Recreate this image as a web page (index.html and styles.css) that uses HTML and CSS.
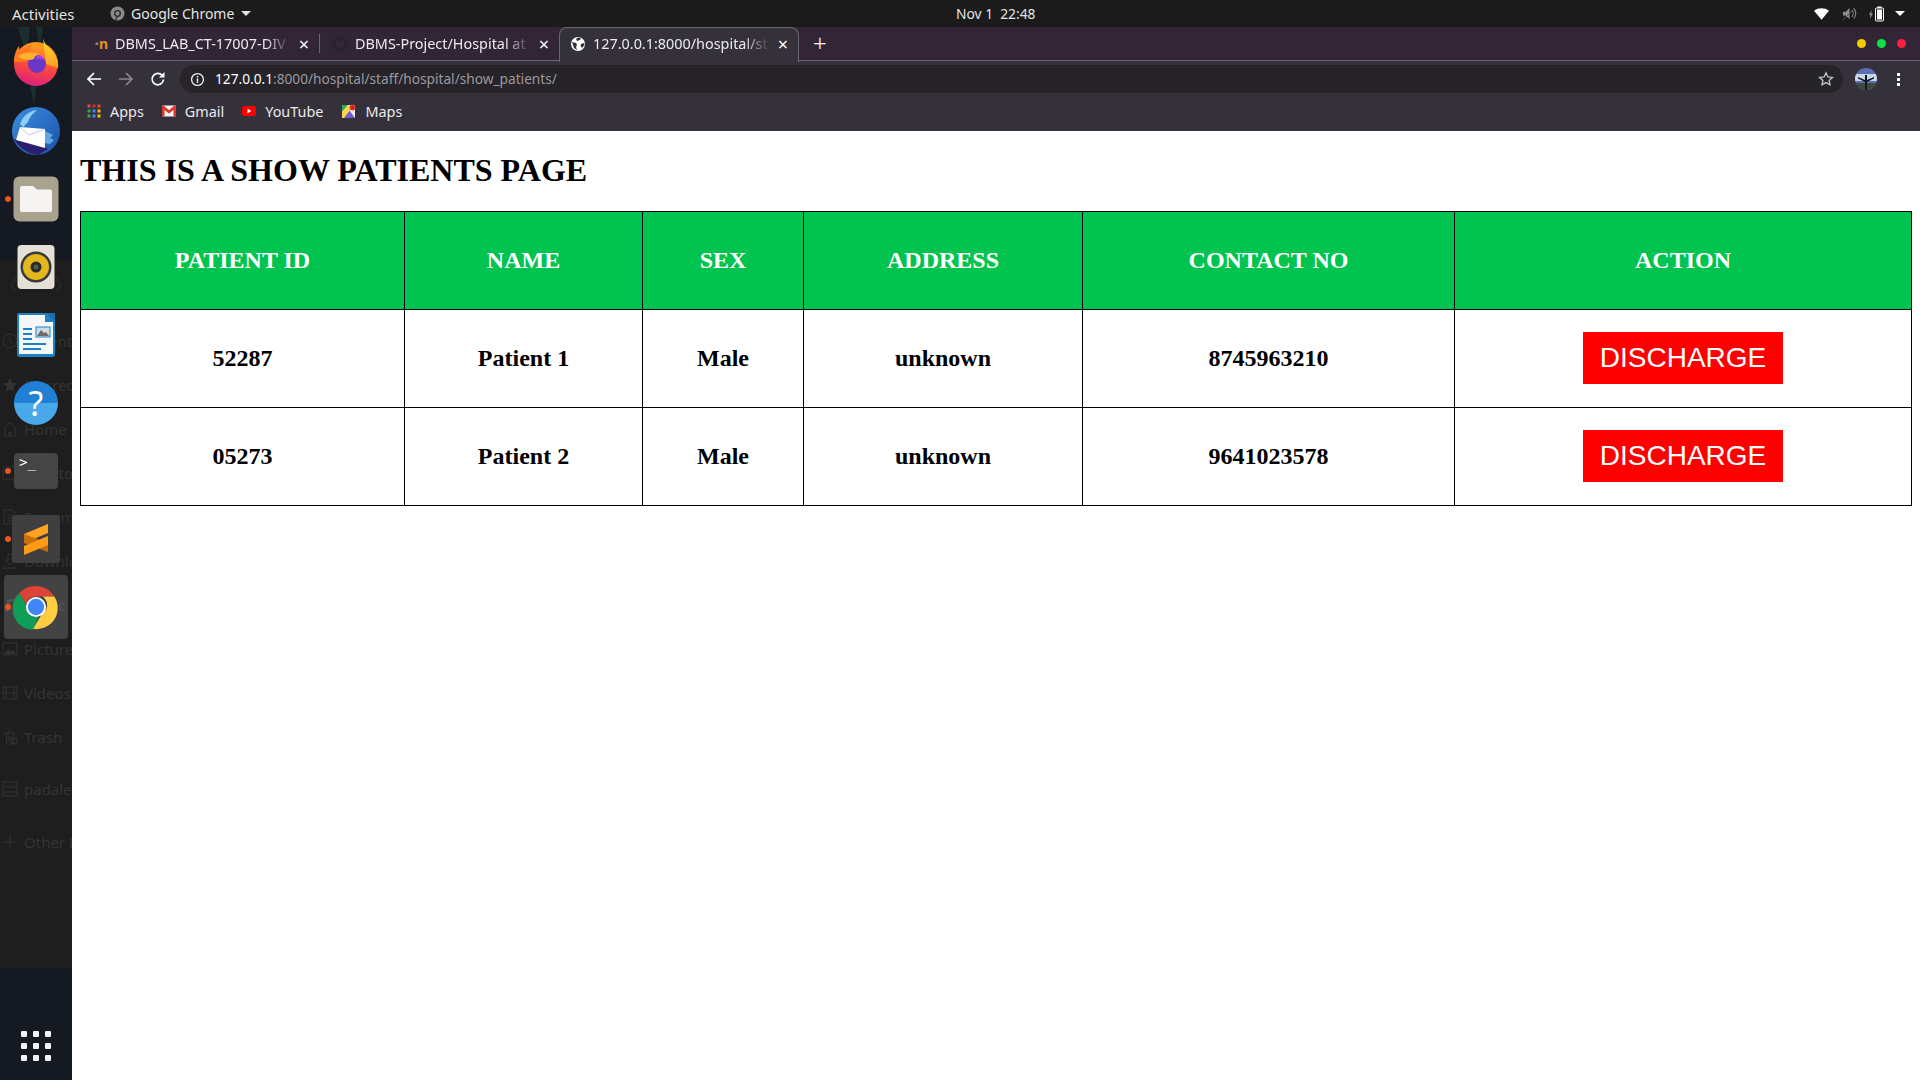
FILE: index.html
```html
<!DOCTYPE html>
<html lang="en">
<head>
<meta charset="utf-8">
<title>Show patients</title>
<link rel="stylesheet" href="styles.css">
</head>
<body>
<div class="screen">
  <header class="topbar">
    <span class="activities">Activities</span>
    <div class="appmenu">
      <svg class="appicon" viewBox="0 0 16 16"><circle cx="8" cy="8" r="7.5" fill="#8a8a8a"/><circle cx="8" cy="8" r="3" fill="none" stroke="#2a2a2a" stroke-width="1.4"/><path d="M8 11l-2 4" stroke="#2a2a2a" stroke-width="1.2"/></svg>
      <span>Google Chrome</span>
      <i class="caret"></i>
    </div>
    <div class="clock">Nov 1&nbsp;&nbsp;22:48</div>
    <div class="tray">
      <svg class="wifi" viewBox="0 0 16 12"><path d="M0 2.500C4.500-1 11.500-1 16 2.500L8 12z" fill="#fff"/></svg>
      <svg class="vol" viewBox="0 0 16 16"><path d="M1 6h3l4-4v12l-4-4H1z" fill="#8d8d8d"/><path d="M10.500 4.500a5 5 0 0 1 0 7M12.500 2.500a8 8 0 0 1 0 11" fill="none" stroke="#8d8d8d" stroke-width="1.100"/><path d="M1 15L14 2" stroke="#5a5a5a" stroke-width="1"/></svg>
      <svg class="batt" viewBox="0 0 16 16"><path d="M2.500 4L0 9h1.600L1 13l3-5.500H2.400z" fill="#8d8d8d"/><rect x="6.500" y="2" width="8" height="13" rx="1" fill="none" stroke="#fff" stroke-width="1"/><rect x="8.500" y="0.500" width="4" height="1.500" fill="#fff"/><rect x="8" y="3.500" width="5" height="10" fill="#fff"/></svg>
      <i class="caret wide"></i>
    </div>
  </header>

  <div class="desktop">
    <aside class="sidebar">
      <svg class="streaks" viewBox="0 0 72 80"><path d="M18 0l9 30 3-30zM27 44l7 34 4-32zM36 0l4 22 3-22z" fill="#1b2f30"/></svg>
      <div class="ghost">
        <svg class="chevrons" viewBox="0 0 50 16"><path d="M5 1L0 8l5 7M45 1l5 7-5 7" fill="none" stroke="#333" stroke-width="1"/></svg>
        <div class="ghost-row"><svg class="g-ic" viewBox="0 0 16 16"><circle cx="8" cy="8" r="7"/><path d="M8 4v4l3 2"/></svg>Recent</div>
        <div class="ghost-row"><svg class="g-ic" viewBox="0 0 16 16"><path class="solid" d="M8 1l2 5 5 .5-4 3.500 1.200 5L8 12.500 3.800 15 5 10 1 6.500 6 6z"/></svg>Starred</div>
        <div class="ghost-row"><svg class="g-ic" viewBox="0 0 16 16"><path d="M1 8l7-6 7 6M3 7v8h10V7M7 15v-4h2v4"/></svg>Home</div>
        <div class="ghost-row"><svg class="g-ic" viewBox="0 0 16 16"><rect x="1" y="2" width="14" height="12"/></svg>Desktop</div>
        <div class="ghost-row"><svg class="g-ic" viewBox="0 0 16 16"><path d="M2 1h8l4 4v10H2zM5 6h6M5 9h6M5 12h6"/></svg>Documents</div>
        <div class="ghost-row"><svg class="g-ic" viewBox="0 0 16 16"><path d="M6 1h4v6h3l-5 5-5-5h3zM1 15h14"/></svg>Downloads</div>
        <div class="ghost-row"><svg class="g-ic" viewBox="0 0 16 16"><path class="solid" d="M5 3l9-2v10a2 2 0 1 1-2-2V4L7 5v8a2 2 0 1 1-2-2z"/></svg>Music</div>
        <div class="ghost-row"><svg class="g-ic" viewBox="0 0 16 16"><rect x="1" y="2" width="14" height="12"/><path class="solid" d="M2 13l4-5 3 3 2-2 3 4z"/></svg>Pictures</div>
        <div class="ghost-row"><svg class="g-ic" viewBox="0 0 16 16"><rect x="1" y="2" width="14" height="12"/><path d="M4 2v12M12 2v12M1 8h14"/></svg>Videos</div>
        <div class="ghost-row"><svg class="g-ic" viewBox="0 0 16 16"><path d="M2 4h10M4 4l1 11h6l1-11M6 2h3M7 7v5M9 7v5"/><circle cx="12" cy="12" r="3"/></svg>Trash</div>
        <div class="ghost-row drive"><svg class="g-ic" viewBox="0 0 16 16"><rect x="1" y="1" width="14" height="14"/><path d="M1 6h14M1 11h14"/></svg>padaleX</div>
        <div class="ghost-row other"><svg class="g-ic" viewBox="0 0 16 16"><path d="M8 1v14M1 8h14"/></svg>Other Locations</div>
      </div>
      <nav class="dock">
        <div class="dock-item">
          <svg class="ic48 up2" viewBox="0 0 48 48">
            <defs>
              <linearGradient id="ff" x1="0.6" y1="0.100" x2="0.400" y2="1"><stop offset="0" stop-color="#ff9a1f"/><stop offset="0.550" stop-color="#f8453f"/><stop offset="1" stop-color="#dc1f82"/></linearGradient>
              <linearGradient id="fy" x1="0.500" y1="0" x2="0.500" y2="1"><stop offset="0" stop-color="#ffe22e"/><stop offset="1" stop-color="#ff9a1f"/></linearGradient>
            </defs>
            <circle cx="24" cy="26" r="22" fill="url(#ff)"/>
            <path d="M31 0c1 6 5 8 9 13s7 10 6 17l-12-4z" fill="url(#fy)"/>
            <path d="M2 24c0-7 2-12 5-16 0 3 1 5 3 6 2-3 5-6 9-7-1 2-1 4 0 5l-6 12z" fill="#ff7a1f"/>
            <circle cx="25" cy="26" r="9" fill="#6a38c9"/>
            <path d="M25 17a9 9 0 0 1 8 5c-4-2-7-2-9 0z" fill="#a04be0"/>
            <path d="M6 18c5-3 13-5 21-2-3 1-5 3-5 5-6 2-12 1-16-3z" fill="#ffb22e"/>
          </svg>
        </div>
        <div class="dock-item">
          <svg class="ic48" viewBox="0 0 48 48">
            <defs><linearGradient id="tb" x1="0" y1="0" x2="1" y2="1"><stop offset="0" stop-color="#3b8fe0"/><stop offset="1" stop-color="#1c4fa8"/></linearGradient></defs>
            <circle cx="24" cy="24" r="24" fill="url(#tb)"/>
            <path d="M2 32c4 8 13 15 24 16l10-6-8-6z" fill="#2a1f6e"/>
            <path d="M8 20L33 22V41L4 33z" fill="#fff"/>
            <path d="M8 20l9 8 16-6" fill="none" stroke="#b6c1cf" stroke-width="0.800"/>
            <path d="M8 17c3-8 9-13 17-14-5 4-8 8-9 12l-5 5z" fill="#8fd0f5"/>
            <path d="M33 24l8 4-3 3 4 2-4 4-5-1z" fill="#5fa8e6"/>
          </svg>
        </div>
        <div class="dock-item running">
          <svg class="ic46" viewBox="0 0 46 46">
            <rect x="0.500" y="0.500" width="45" height="45" rx="6" fill="#a9a28f"/>
            <path d="M7 12a2 2 0 0 1 2-2h11l4 3.500h13a2 2 0 0 1 2 2V34a2 2 0 0 1-2 2H9a2 2 0 0 1-2-2z" fill="#f6f5f4"/>
          </svg>
        </div>
        <div class="dock-item">
          <svg class="ic46" viewBox="0 0 46 46">
            <rect x="4.500" y="1" width="37" height="44" rx="4" fill="#e4e0d5"/>
            <circle cx="23" cy="23" r="15.500" fill="#3a3a3a"/>
            <circle cx="23" cy="23" r="13" fill="#e3b81c"/>
            <circle cx="23" cy="23" r="5.500" fill="#2a2a2a"/>
            <circle cx="23" cy="23" r="2.500" fill="#555"/>
          </svg>
        </div>
        <div class="dock-item">
          <svg class="ic46 shift-l" viewBox="0 0 46 46">
            <path d="M6 3a2 2 0 0 1 2-2h28l8 8v33a3 3 0 0 1-3 3H9a3 3 0 0 1-3-3z" fill="#1b83c4"/>
            <path d="M8 3h26v7h8v32H8z" fill="#f5f7f9"/>
            <path d="M35 1l9 9V1z" fill="#1b6fa8"/>
            <rect x="25" y="15" width="14" height="10" fill="#cfdbe6" stroke="#1b83c4"/>
            <path d="M26 24l4-6 3 3 2-1 3 4z" fill="#6b6b6b"/>
            <path d="M12 17h9M12 22h9M12 27h9M12 32h23M12 37h18" stroke="#1b83c4" stroke-width="2.200"/>
          </svg>
        </div>
        <div class="dock-item">
          <div class="help">?</div>
        </div>
        <div class="dock-item running">
          <div class="term"><span>&gt;_</span></div>
        </div>
        <div class="dock-item running">
          <div class="sublime-bg">
            <svg class="ic-sub" viewBox="0 0 24 31">
              <path d="M0 10L24 0V9L0 19z" fill="#ffa21f"/>
              <path d="M0 10V19L24 28V19z" fill="#c96e0c"/>
              <path d="M0 22L24 12V21L0 31z" fill="#ff9b14"/>
            </svg>
          </div>
        </div>
        <div class="dock-item running active">
          <svg class="ic44" viewBox="0 0 48 48">
            <path d="M24 2a22 22 0 0 1 19.050 11H24a11 11 0 0 0-10.400 7.500L6.600 9.600A22 22 0 0 1 24 2z" fill="#db4437"/>
            <path d="M6.600 9.600l9.500 16.500a9 9 0 0 0 10.900 7.400l-5.900 14.300A22 22 0 0 1 6.600 9.600z" fill="#0f9d58"/>
            <path d="M43.050 13a22 22 0 0 1-22 33.800L30 31.500A11 11 0 0 0 31 13z" fill="#ffcd40"/>
            <circle cx="24" cy="24" r="10.500" fill="#fff"/>
            <circle cx="24" cy="24" r="8.500" fill="#4285f4"/>
          </svg>
        </div>
      </nav>
      <div class="grid-btn">
        <i></i><i></i><i></i><i></i><i></i><i></i><i></i><i></i><i></i>
      </div>
    </aside>

    <main class="browser">
      <div class="tabstrip">
        <div class="tab">
          <span class="fav fav-m"><b class="m-dot">&#183;</b>n</span>
          <span class="tab-title">DBMS_LAB_CT-17007-DIV</span>
          <span class="tab-x">&#215;</span>
        </div>
        <div class="tab sep">
          <svg class="fav" viewBox="0 0 16 16"><circle cx="8" cy="8" r="8" fill="#2b2231"/><path d="M4 4l2 1.500h4L12 4v4a4 4 0 0 1-8 0z" fill="#33293a"/></svg>
          <span class="tab-title">DBMS-Project/Hospital at</span>
          <span class="tab-x">&#215;</span>
        </div>
        <div class="tab current">
          <svg class="fav" viewBox="0 0 16 16"><circle cx="8" cy="8" r="7" fill="#fff"/><path d="M2 6l4 1 1 2-1 2 1 3-3-2zM8 1.500l3 .500-1 2-3 1-1-2zM11 8l3-1 .5 2-2.500 3-1.500-2z" fill="#35313a"/></svg>
          <span class="tab-title">127.0.0.1:8000/hospital/st</span>
          <span class="tab-x">&#215;</span>
        </div>
        <span class="newtab">+</span>
        <div class="winbtns"><i class="w-y"></i><i class="w-g"></i><i class="w-r"></i></div>
      </div>

      <div class="toolbar">
        <svg class="nav-ic" viewBox="0 0 16 16"><path d="M15 8H2M8 2L2 8l6 6" fill="none" stroke="#fff" stroke-width="1.700"/></svg>
        <svg class="nav-ic dim" viewBox="0 0 16 16"><path d="M1 8h13M8 2l6 6-6 6" fill="none" stroke="#88868b" stroke-width="1.700"/></svg>
        <svg class="nav-ic" viewBox="0 0 16 16"><path d="M13.500 8.500A5.700 5.700 0 1 1 12 4.200" fill="none" stroke="#fff" stroke-width="1.700"/><path d="M14.500 1v5.500H9z" fill="#fff"/></svg>
        <div class="omnibox">
          <svg class="info" viewBox="0 0 16 16"><circle cx="8" cy="8" r="6.300" fill="none" stroke="#f0f0f0" stroke-width="1.400"/><rect x="7.200" y="7" width="1.600" height="4.500" fill="#f0f0f0"/><rect x="7.200" y="4.300" width="1.600" height="1.600" fill="#f0f0f0"/></svg>
          <span class="url"><b>127.0.0.1</b>:8000/hospital/staff/hospital/show_patients/</span>
          <svg class="star" viewBox="0 0 16 16"><path d="M8 1.800l1.900 4.100 4.500.5-3.300 3 .9 4.400L8 11.600l-4 2.200.9-4.400-3.300-3 4.500-.5z" fill="none" stroke="#c8c7ca" stroke-width="1.300"/></svg>
        </div>
        <svg class="avatar" viewBox="0 0 22 22">
          <defs><clipPath id="av"><circle cx="11" cy="11" r="11"/></clipPath></defs>
          <g clip-path="url(#av)">
            <rect width="22" height="22" fill="#5c6fb4"/>
            <rect y="6" width="22" height="7" fill="#c9d4ea"/>
            <rect y="15" width="22" height="7" fill="#3f4a3f"/>
            <path d="M3 9l7 3V7h2v5l7-3v1.500l-7 3.500v9h-2v-9l-7-3.500z" fill="#15171c"/>
          </g>
        </svg>
        <div class="kebab"><i></i><i></i><i></i></div>
      </div>

      <div class="bookmarks">
        <div class="bm">
          <svg class="bm-ic" viewBox="0 0 14 14">
            <rect x="0.500" y="0.500" width="3" height="3" fill="#e8453c"/><rect x="5.500" y="0.500" width="3" height="3" fill="#c0392b"/><rect x="10.500" y="0.500" width="3" height="3" fill="#e8453c"/>
            <rect x="0.500" y="5.500" width="3" height="3" fill="#34a853"/><rect x="5.500" y="5.500" width="3" height="3" fill="#4285f4"/><rect x="10.500" y="5.500" width="3" height="3" fill="#fbbc05"/>
            <rect x="0.500" y="10.500" width="3" height="3" fill="#34a853"/><rect x="5.500" y="10.500" width="3" height="3" fill="#4285f4"/><rect x="10.500" y="10.500" width="3" height="3" fill="#fbbc05"/>
          </svg>Apps</div>
        <div class="bm">
          <svg class="bm-ic" viewBox="0 0 14 14"><rect x="0" y="1.500" width="14" height="11" rx="1" fill="#f2f2f2"/><path d="M0 2.500v9.500a.5.5 0 0 0 .5.5H2.500V6l4.500 3.500L11.500 6v6.500h2a.5.5 0 0 0 .5-.5V2.500L12.500 1.500 7 6 1.500 1.500z" fill="#d93a2e"/></svg>Gmail</div>
        <div class="bm">
          <svg class="bm-ic" viewBox="0 0 14 14"><rect x="0" y="2" width="14" height="10" rx="2.500" fill="#f00"/><path d="M5.500 4.800L9.500 7l-4 2.200z" fill="#fff"/></svg>YouTube</div>
        <div class="bm">
          <svg class="bm-ic" viewBox="0 0 14 14"><rect x="0" y="1" width="13" height="13" fill="#e8eaed"/><path d="M0 14L7 6l6 8z" fill="#6f5bd1"/><path d="M0 1h6L0 8z" fill="#34a853"/><path d="M0 8l6-7 3 4-7 9H0z" fill="#fbd54a"/><circle cx="10.500" cy="3.500" r="3" fill="#e0382c"/><circle cx="10.500" cy="3.500" r="1" fill="#8a1d15"/></svg>Maps</div>
      </div>

      <section class="page">
        <h1 class="page-title">THIS IS A SHOW PATIENTS PAGE</h1>
        <table class="patients">
          <colgroup>
            <col class="c1"><col class="c2"><col class="c3"><col class="c4"><col class="c5"><col class="c6">
          </colgroup>
          <thead>
            <tr>
              <th>PATIENT ID</th><th>NAME</th><th>SEX</th><th>ADDRESS</th><th>CONTACT NO</th><th>ACTION</th>
            </tr>
          </thead>
          <tbody>
            <tr>
              <td>52287</td><td>Patient 1</td><td>Male</td><td>unknown</td><td>8745963210</td>
              <td><a class="discharge">DISCHARGE</a></td>
            </tr>
            <tr>
              <td>05273</td><td>Patient 2</td><td>Male</td><td>unknown</td><td>9641023578</td>
              <td><a class="discharge">DISCHARGE</a></td>
            </tr>
          </tbody>
        </table>
      </section>
    </main>
  </div>
</div>
</body>
</html>
```
FILE: styles.css
```css
* { box-sizing: border-box; }
html, body { margin: 0; height: 100%; overflow: hidden; background: #fff; }
.screen { width: 1920px; height: 1080px; display: flex; flex-direction: column; font-family: "Noto Sans", sans-serif; }

/* top bar */
.topbar { height: 27px; flex: none; background: #1b1b1b; color: #e4e4e4; font-size: 14px; display: flex; align-items: center; position: relative; }
.activities { margin-left: 12px; width: 98px; font-size: 15px; }
.appmenu { display: flex; align-items: center; gap: 6px; }
.appicon { width: 15px; height: 15px; }
.caret { width: 0; height: 0; border-left: 5px solid transparent; border-right: 5px solid transparent; border-top: 5px solid #e4e4e4; margin-left: 1px; }
.caret.wide { border-top-color: #fff; }
.clock { position: absolute; left: 956px; font-size: 13.8px; }
.tray { margin-left: auto; display: flex; align-items: center; padding-right: 15px; }
.wifi { width: 15px; height: 12px; margin-right: 13px; }
.vol { width: 15px; height: 15px; margin-right: 12px; }
.batt { width: 16px; height: 16px; margin-right: 9px; }

.desktop { flex: 1; display: flex; min-height: 0; }

/* sidebar */
.sidebar { width: 72px; flex: none; background: #141922; position: relative; overflow: hidden; }
.streaks { position: absolute; left: 0; top: 0; width: 72px; height: 80px; }
.ghost { position: relative; margin-top: 233px; height: 708px; background: #1e1e1e; padding-top: 59px; color: #343434; font-size: 15px; white-space: nowrap; overflow: hidden; }
.chevrons { position: absolute; left: 11px; top: 17px; width: 50px; height: 16px; }
.ghost-row { height: 44px; display: flex; align-items: center; gap: 6px; padding-left: 2px; }
.ghost-row.drive { margin-top: 8px; }
.ghost-row.other { margin-top: 9px; }
.g-ic { width: 16px; height: 16px; flex: none; fill: none; stroke: #333; stroke-width: 1; }
.g-ic .solid { fill: #333; stroke: none; }
.dock { position: absolute; left: 0; top: 2px; width: 72px; display: flex; flex-direction: column; }
.dock-item { height: 68px; display: flex; align-items: center; justify-content: center; position: relative; }
.dock-item.running::before { content: ""; position: absolute; left: 4.500px; top: 31px; width: 6px; height: 6px; border-radius: 50%; background: #e95420; z-index: 2; }
.dock-item.active::after { content: ""; position: absolute; left: 4px; top: 2px; width: 64px; height: 64px; border-radius: 4px; background: rgba(255,255,255,.17); }
.ic48 { width: 48px; height: 48px; }
.up2 { margin-top: -3px; }
.ic46 { width: 46px; height: 46px; }
.shift-l { margin-left: -4px; }
.ic44 { width: 46px; height: 46px; position: relative; z-index: 1; }
.help { width: 44px; height: 44px; border-radius: 50%; background: linear-gradient(#1f80d6 50%, #49a8ea 50%); color: #fff; font-size: 34px; line-height: 44px; text-align: center; }
.term { width: 44px; height: 36px; border-radius: 4px; background: #454545; color: #fff; font-size: 14px; line-height: 16px; padding: 1px 0 0 5px; font-family: "DejaVu Sans Mono", monospace; }
.sublime-bg { width: 48px; height: 48px; border-radius: 3px; background: #3f3f3f; display: flex; align-items: center; justify-content: center; }
.ic-sub { width: 24px; height: 31px; }
.grid-btn { position: absolute; left: 21px; top: 1004px; width: 30px; display: grid; grid-template-columns: repeat(3, 6px); gap: 6px; }
.grid-btn i { width: 6px; height: 6px; background: #f2f2f2; border-radius: 1px; }

/* browser chrome */
.browser { flex: 1; min-width: 0; display: flex; flex-direction: column; }
.tabstrip { height: 34px; flex: none; background: #322636; border-bottom: 1px solid #6a6570; display: flex; padding-left: 7px; color: #eceaee; font-size: 14.4px; position: relative; }
.tab { width: 240px; height: 33px; display: flex; align-items: center; padding: 0 8px 0 13px; position: relative; }
.tab.sep::before { content: ""; position: absolute; left: 0; top: 7px; bottom: 7px; width: 1px; background: #6a6570; }
.tab.current { height: 35px; background: #35313a; border: 1px solid #6a6570; border-bottom: 0; border-radius: 8px 8px 0 0; z-index: 1; padding: 0 8px 3px 10px; }
.fav { width: 16px; height: 16px; flex: none; }
.fav-m { color: #e8901e; font-weight: 700; font-size: 14px; line-height: 16px; overflow: hidden; white-space: nowrap; text-align: right; }
.m-dot { color: #8a8a8a; }
.tab-title { flex: 1; margin-left: 7px; overflow: hidden; white-space: nowrap; -webkit-mask-image: linear-gradient(90deg, #000 85%, transparent 100%); mask-image: linear-gradient(90deg, #000 85%, transparent 100%); }
.tab-x { width: 14px; margin-left: 6px; text-align: center; color: #fff; font-size: 18px; line-height: 16px; }
.newtab { margin-left: 14px; color: #fff; font-size: 24px; line-height: 32px; font-weight: 300; }
.winbtns { margin-left: auto; display: flex; align-items: center; gap: 11px; padding-right: 14px; }
.winbtns i { width: 9px; height: 9px; border-radius: 50%; }
.w-y { background: #f5cc00; }
.w-g { background: #0fe043; }
.w-r { background: #fa2040; }

.toolbar { height: 32px; flex: none; background: #35313a; display: flex; align-items: center; padding: 4px 0 0 14px; }
.nav-ic { width: 16px; height: 16px; margin-right: 16px; flex: none; }
.omnibox { width: 1663px; height: 28px; margin-left: -2px; background: #262329; border-radius: 14px; display: flex; align-items: center; padding: 0 9px 0 10px; }
.info { width: 15px; height: 15px; flex: none; }
.url { margin: 0 0 2px 10px; color: #9b999e; font-size: 13.7px; }
.url b { color: #fff; font-weight: 400; }
.star { width: 16px; height: 16px; margin-left: auto; }
.avatar { width: 22px; height: 22px; margin-left: 12px; flex: none; }
.kebab { margin-left: 20px; display: flex; flex-direction: column; gap: 2px; }
.kebab i { width: 3px; height: 3px; background: #fff; display: block; }

.bookmarks { height: 38px; flex: none; background: #35313a; display: flex; align-items: center; padding: 0 0 2px 15px; color: #eceaee; font-size: 14.4px; }
.bm { display: flex; align-items: center; margin-right: 18px; }
.bm:nth-child(3) { margin-right: 19px; }
.bm-ic { width: 14px; height: 14px; margin-right: 9px; flex: none; }

/* page */
.page { flex: 1; background: #fff; padding: 8px; color: #000; font-family: "Liberation Serif", serif; }
.page-title { font-size: 32px; font-weight: 700; line-height: 37px; margin: 13.440px 0 21.440px; }
.patients { width: 1831px; table-layout: fixed; border-collapse: collapse; font-size: 24px; font-weight: 700; text-align: center; }
.patients th, .patients td { border: 1px solid #000; height: 98px; padding: 0; text-align: center; vertical-align: middle; }
.patients th { background: #00c44f; color: #fff; }
.c1 { width: 324px; }
.c2 { width: 238px; }
.c3 { width: 161px; }
.c4 { width: 279px; }
.c5 { width: 372px; }
.c6 { width: 457px; }
.discharge { display: inline-block; vertical-align: middle; background: #f00; color: #fff; font-family: "Liberation Sans", sans-serif; font-weight: 400; font-size: 28px; line-height: 32px; padding: 10px 17px; }
```
